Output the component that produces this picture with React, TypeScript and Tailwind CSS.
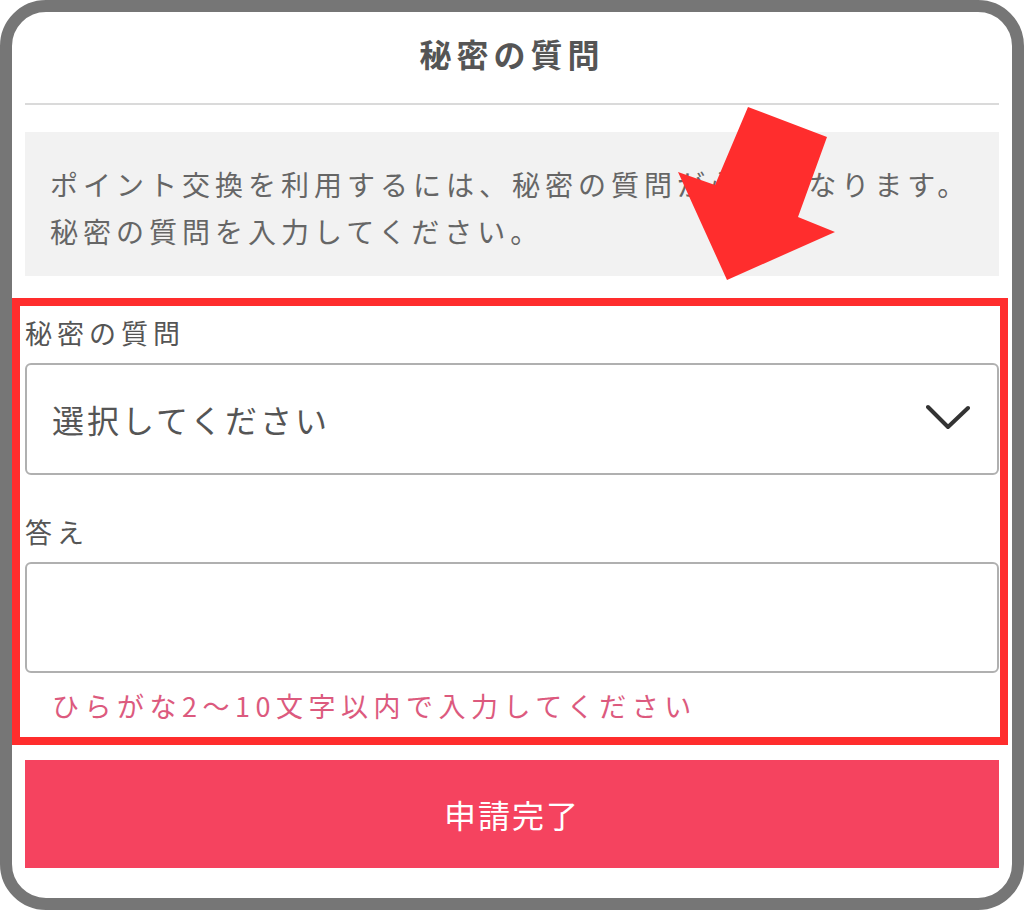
import React from 'react';

const font = { fontFamily: '"Noto Sans CJK JP", "Noto Sans", sans-serif' };

function Chevron() {
  return (
    <svg width="44" height="30" viewBox="0 0 44 30" fill="none" className="shrink-0">
      <path d="M2 3 L22 23 L42 4" stroke="#333333" strokeWidth="4" strokeLinecap="round" strokeLinejoin="round" />
    </svg>
  );
}

function Arrow() {
  return (
    <svg
      width="175"
      height="190"
      viewBox="0 0 175 190"
      className="absolute left-[670px] top-[100px] pointer-events-none"
    >
      <polygon points="78,7 157,37 128,117 165,132 57,180 8,72 45,85" fill="#ff2d2d" />
    </svg>
  );
}

export default function App() {
  return (
    <div className="relative w-[1024px] h-[910px] bg-white" style={font}>
      <div className="w-full h-full border-[12px] border-[#767676] rounded-[46px] bg-white flex flex-col px-[13px]">
        <div className="h-[91px] flex justify-center pt-[23px]">
          <h1 className="text-[32px] leading-[36px] font-bold tracking-[5px] text-[#555555]">秘密の質問</h1>
        </div>
        <div className="h-[2px] bg-[#dadada]" />

        <div className="mt-[27px] h-[144px] bg-[#f2f2f2] pt-[29px] pl-[25px]">
          <p className="text-[28px] leading-[47px] tracking-[5px] text-[#666666]">
            ポイント交換を利用するには、秘密の質問が必要となります。
            <br />
            秘密の質問を入力してください。
          </p>
        </div>

        <div className="mt-[22px] -ml-[13px] -mr-[9px] border-[8px] border-[#ff2d2d] pl-[5px] pr-[1px] pt-[9px] pb-[13px]">
          <label className="block text-[27px] leading-[36px] tracking-[5px] text-[#555555]">秘密の質問</label>
          <div className="mt-[12px] h-[112px] border-2 border-[#b0b0b0] rounded-[6px] flex items-center justify-between pl-[25px] pr-[27px]">
            <span className="text-[32px] leading-[40px] tracking-[3px] text-[#555555]">選択してください</span>
            <Chevron />
          </div>

          <label className="block mt-[39px] text-[27px] leading-[36px] tracking-[5px] text-[#555555]">答え</label>
          <div className="mt-[12px] h-[111px] border-2 border-[#b0b0b0] rounded-[6px]" />

          <p className="mt-[15px] pl-[27px] text-[27px] leading-[36px] tracking-[5.5px] text-[#dc5a7e]">
            ひらがな2〜10文字以内で入力してください
          </p>
        </div>

        <button className="mt-[15px] h-[108px] bg-[#f5435f] text-white text-[32px] tracking-[2px] flex items-center justify-center">
          申請完了
        </button>
      </div>
      <Arrow />
    </div>
  );
}
